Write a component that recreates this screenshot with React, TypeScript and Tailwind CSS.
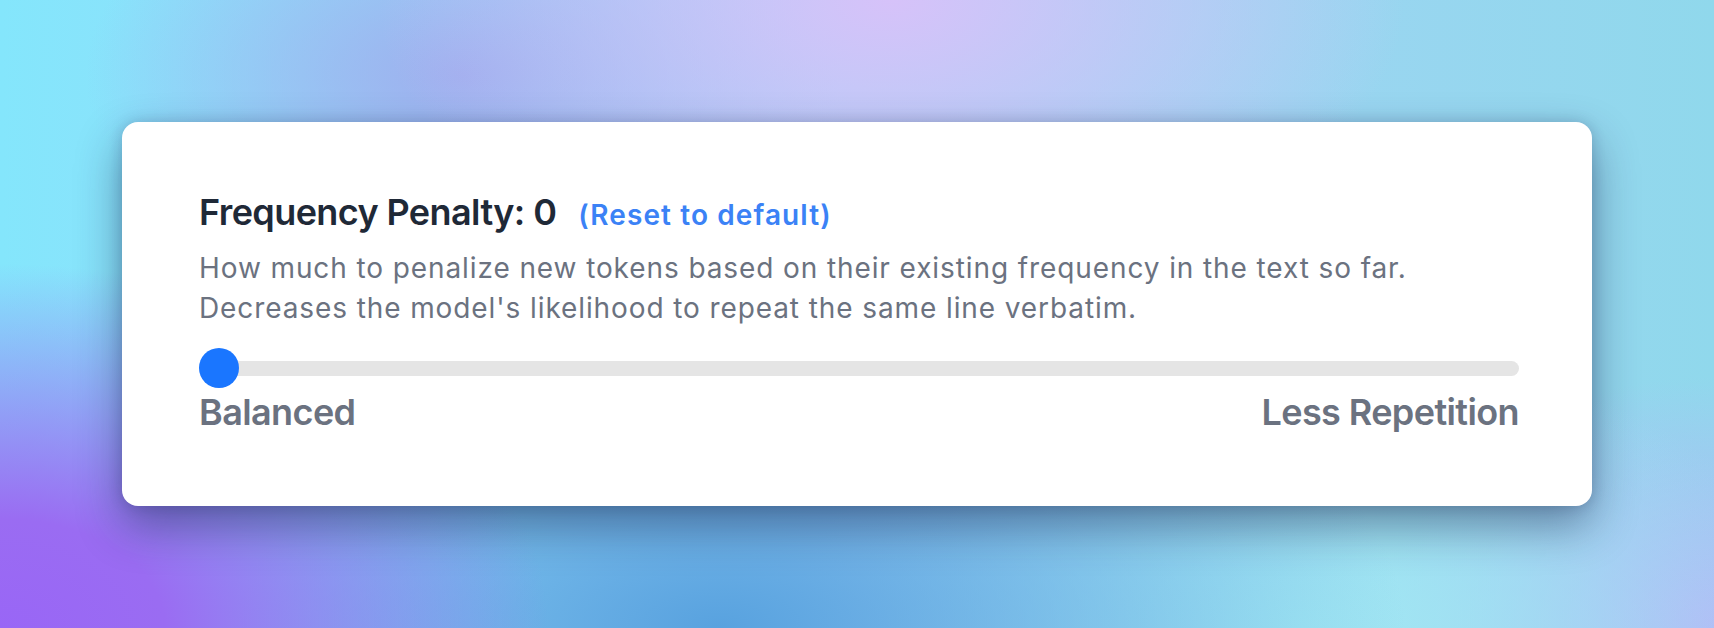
import React from "react";

export default function App() {
  return (
    <div className="relative h-[628px] w-full overflow-hidden bg-[radial-gradient(ellipse_32%_58%_at_0%_100%,#9966f6_0%,#9a6cf2_30%,transparent_100%),radial-gradient(ellipse_30%_45%_at_52%_0%,#d6c2f9_0%,transparent_100%),radial-gradient(ellipse_22%_35%_at_27%_12%,#9eaeee_0%,transparent_100%),radial-gradient(ellipse_40%_55%_at_42%_100%,#58a2df_0%,transparent_100%),radial-gradient(ellipse_30%_45%_at_76%_100%,#a2e8f3_0%,transparent_100%),radial-gradient(ellipse_20%_40%_at_100%_100%,#b4b6f7_0%,transparent_100%),linear-gradient(90deg,#84e6fc_0%,#a6d2f6_50%,#90d8ec_100%)] font-['Inter','Noto_Sans',sans-serif]">
      <div className="pt-[122px] pl-[122px]">
        <div className="w-[1470px] h-[384px] rounded-[16px] bg-white shadow-[0_20px_45px_rgba(20,30,70,0.45),0_0_14px_rgba(20,30,80,0.18)] pl-[77px] pr-[73px] pt-[62px]">
          <div className="flex items-baseline">
            <span className="text-[36px] leading-[56px] font-semibold tracking-[-0.6px] text-[#1f2937]">
              Frequency Penalty: 0
            </span>
            <span className="ml-[22px] text-[28px] leading-[40px] font-semibold tracking-[1.1px] text-[#3b82f6]">
              (Reset to default)
            </span>
          </div>
          <p className="mt-[8px] text-[28px] leading-[40px] tracking-[0.9px] text-[#6b7280]">
            How much to penalize new tokens based on their existing frequency in the text so far.
            <br />
            Decreases the model's likelihood to repeat the same line verbatim.
          </p>
          <div className="relative mt-[20px] h-[40px] flex items-center">
            <div className="h-[15px] w-full rounded-full bg-[#e5e5e5]" />
            <div className="absolute left-0 top-0 h-[40px] w-[40px] rounded-full bg-[#1a76ff]" />
          </div>
          <div className="mt-[4px] flex justify-between text-[36px] leading-[40px] font-semibold tracking-[-0.6px] text-[#6b7280]">
            <span>Balanced</span>
            <span>Less Repetition</span>
          </div>
        </div>
      </div>
    </div>
  );
}
